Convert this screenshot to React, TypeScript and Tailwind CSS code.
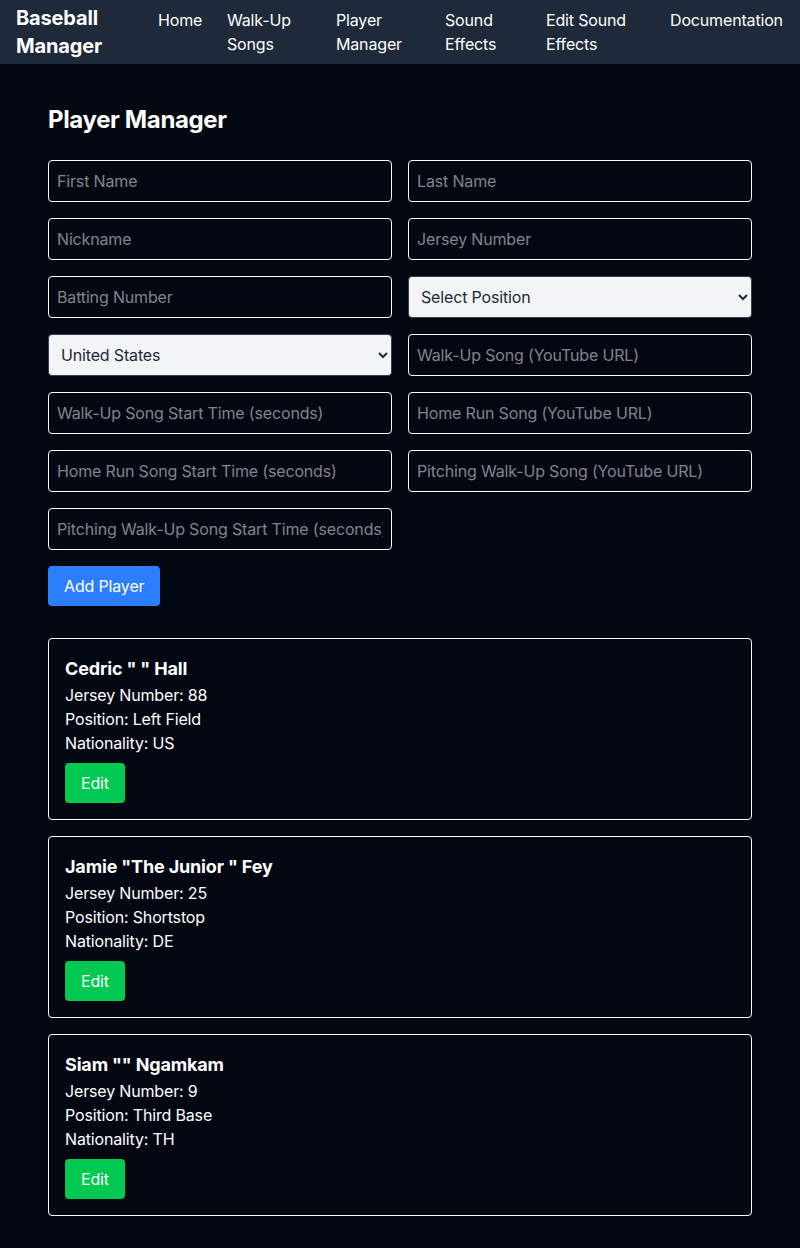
import { useState } from 'react';

interface Player {
    first: string;
    nick: string;
    last: string;
    jersey: number;
    position: string;
    nationality: string;
}

const players: Player[] = [
    { first: 'Cedric', nick: ' ', last: 'Hall', jersey: 88, position: 'Left Field', nationality: 'US' },
    { first: 'Jamie', nick: 'The Junior ', last: 'Fey', jersey: 25, position: 'Shortstop', nationality: 'DE' },
    { first: 'Siam', nick: '', last: 'Ngamkam', jersey: 9, position: 'Third Base', nationality: 'TH' },
];

const links = [
    { label: 'Home', w: 'w-[45px]' },
    { label: 'Walk-Up Songs', w: 'w-[85px]' },
    { label: 'Player Manager', w: 'w-[85px]' },
    { label: 'Sound Effects', w: 'w-[77px]' },
    { label: 'Edit Sound Effects', w: 'w-[100px]' },
    { label: 'Documentation', w: 'w-[114px]' },
];

const inputClass = 'w-full h-[42px] border border-white rounded p-2 bg-transparent text-white text-base';
const selectClass = 'w-full h-[42px] border border-gray-700 rounded px-2 bg-gray-100 text-gray-800 text-base';

export default function App() {
    const [position, setPosition] = useState('');

    return (
        <div className="min-h-screen bg-gray-950 text-white font-['Inter',sans-serif] tracking-[-0.01em]">
            <nav className="h-16 bg-gray-800 flex items-center justify-between px-4">
                <div className="text-xl font-bold w-[90px] leading-7">Baseball Manager</div>
                <ul className="flex gap-6 text-base leading-6">
                    {links.map((l) => (
                        <li key={l.label} className={l.w}>
                            <a href="#">{l.label}</a>
                        </li>
                    ))}
                </ul>
            </nav>

            <main className="px-12 pt-10 pb-8">
                <h1 className="text-2xl font-bold mb-6 tracking-[-0.015em]">Player Manager</h1>
                <div className="grid grid-cols-2 gap-4">
                    <input className={inputClass} placeholder="First Name" />
                    <input className={inputClass} placeholder="Last Name" />
                    <input className={inputClass} placeholder="Nickname" />
                    <input className={inputClass} placeholder="Jersey Number" />
                    <input className={inputClass} placeholder="Batting Number" />
                    <select className={selectClass} value={position} onChange={(e) => setPosition(e.target.value)}>
                        <option value="">Select Position</option>
                        <option>Pitcher</option>
                        <option>Catcher</option>
                        <option>Shortstop</option>
                    </select>
                    <select className={selectClass} defaultValue="US">
                        <option value="US">United States</option>
                        <option value="DE">Germany</option>
                        <option value="TH">Thailand</option>
                    </select>
                    <input className={inputClass} placeholder="Walk-Up Song (YouTube URL)" />
                    <input className={inputClass} placeholder="Walk-Up Song Start Time (seconds)" />
                    <input className={inputClass} placeholder="Home Run Song (YouTube URL)" />
                    <input className={inputClass} placeholder="Home Run Song Start Time (seconds)" />
                    <input className={inputClass} placeholder="Pitching Walk-Up Song (YouTube URL)" />
                    <input className={inputClass} placeholder="Pitching Walk-Up Song Start Time (seconds)" />
                </div>
                <button className="mt-4 bg-blue-500 text-white px-4 py-2 rounded">Add Player</button>

                <div className="mt-8 flex flex-col gap-4">
                    {players.map((p) => (
                        <div key={p.last} className="border border-white rounded p-4">
                            <h2 className="text-lg font-bold">{p.first} "{p.nick}" {p.last}</h2>
                            <p>Jersey Number: {p.jersey}</p>
                            <p>Position: {p.position}</p>
                            <p>Nationality: {p.nationality}</p>
                            <button className="mt-2 bg-green-500 text-white px-4 py-2 rounded">Edit</button>
                        </div>
                    ))}
                </div>
            </main>
        </div>
    );
}
